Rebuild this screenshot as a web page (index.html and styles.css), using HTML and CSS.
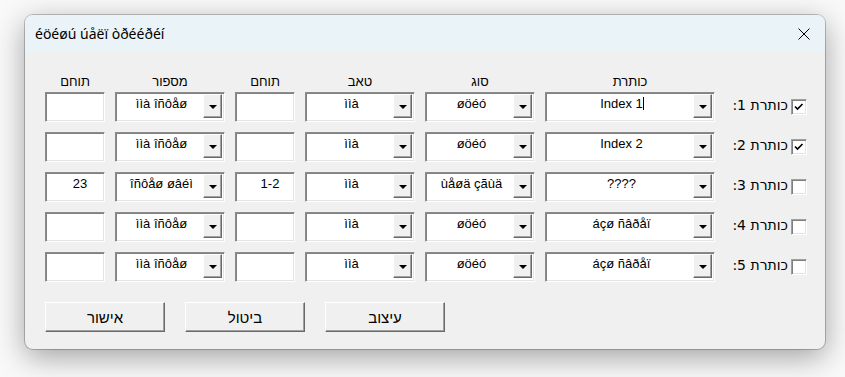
FILE: index.html
```html
<!DOCTYPE html>
<html lang="he">

<head>
    <meta charset="UTF-8">
    <meta name="viewport" content="width=device-width, initial-scale=1.0">
    <title>éöéøú úåëï òðééðéí</title>
    <link rel="stylesheet" href="styles.css">
</head>

<body>
    <div class="win">
        <div class="titlebar">
            <span class="title">éöéøú úåëï òðééðéí</span>
            <svg class="close" width="12" height="12" viewBox="0 0 12 12">
                <path d="M0.5 0.5L11.5 11.5M11.5 0.5L0.5 11.5" stroke="#000" stroke-width="1" fill="none" />
            </svg>
        </div>

        <div class="content">
            <div class="cols head">
                <div>תוחם</div>
                <div>מספור</div>
                <div>תוחם</div>
                <div>טאב</div>
                <div>סוג</div>
                <div>כותרת</div>
                <div></div>
            </div>

            <div class="rows">
                <!-- 1 -->
                <div class="cols row">
                    <div class="edit"></div>
                    <div class="combo"><span class="val">ììà îñôåø</span><span class="drop"></span></div>
                    <div class="edit"></div>
                    <div class="combo"><span class="val">ììà</span><span class="drop"></span></div>
                    <div class="combo"><span class="val">øöéó</span><span class="drop"></span></div>
                    <div class="combo"><span class="val">Index 1<i class="caret"></i></span><span class="drop"></span></div>
                    <div class="chk"><span class="txt" dir="rtl">כותרת 1:</span><span class="box"><svg width="14" height="14" viewBox="0 0 14 14"><path d="M3 6.5L5.5 9L10.5 4" stroke="#000" stroke-width="1.7" fill="none" /></svg></span></div>
                </div>
                <!-- 2 -->
                <div class="cols row">
                    <div class="edit"></div>
                    <div class="combo"><span class="val">ììà îñôåø</span><span class="drop"></span></div>
                    <div class="edit"></div>
                    <div class="combo"><span class="val">ììà</span><span class="drop"></span></div>
                    <div class="combo"><span class="val">øöéó</span><span class="drop"></span></div>
                    <div class="combo"><span class="val">Index 2</span><span class="drop"></span></div>
                    <div class="chk"><span class="txt" dir="rtl">כותרת 2:</span><span class="box"><svg width="14" height="14" viewBox="0 0 14 14"><path d="M3 6.5L5.5 9L10.5 4" stroke="#000" stroke-width="1.7" fill="none" /></svg></span></div>
                </div>
                <!-- 3 -->
                <div class="cols row">
                    <div class="edit">23</div>
                    <div class="combo"><span class="val">îñôåø øâéì</span><span class="drop"></span></div>
                    <div class="edit">1-2</div>
                    <div class="combo"><span class="val">ììà</span><span class="drop"></span></div>
                    <div class="combo"><span class="val">ùåøä çãùä</span><span class="drop"></span></div>
                    <div class="combo"><span class="val">????</span><span class="drop"></span></div>
                    <div class="chk"><span class="txt" dir="rtl">כותרת 3:</span><span class="box"></span></div>
                </div>
                <!-- 4 -->
                <div class="cols row">
                    <div class="edit"></div>
                    <div class="combo"><span class="val">ììà îñôåø</span><span class="drop"></span></div>
                    <div class="edit"></div>
                    <div class="combo"><span class="val">ììà</span><span class="drop"></span></div>
                    <div class="combo"><span class="val">øöéó</span><span class="drop"></span></div>
                    <div class="combo"><span class="val">áçø ñâðåï</span><span class="drop"></span></div>
                    <div class="chk"><span class="txt" dir="rtl">כותרת 4:</span><span class="box"></span></div>
                </div>
                <!-- 5 -->
                <div class="cols row">
                    <div class="edit"></div>
                    <div class="combo"><span class="val">ììà îñôåø</span><span class="drop"></span></div>
                    <div class="edit"></div>
                    <div class="combo"><span class="val">ììà</span><span class="drop"></span></div>
                    <div class="combo"><span class="val">øöéó</span><span class="drop"></span></div>
                    <div class="combo"><span class="val">áçø ñâðåï</span><span class="drop"></span></div>
                    <div class="chk"><span class="txt" dir="rtl">כותרת 5:</span><span class="box"></span></div>
                </div>
            </div>

            <div class="buttons">
                <div class="btn">אישור</div>
                <div class="btn">ביטול</div>
                <div class="btn">עיצוב</div>
            </div>
        </div>
    </div>
</body>

</html>
```

FILE: styles.css
```css
* {
    padding: 0;
    margin: 0;
}

html,
body {
    height: 100%;
}

body {
    box-sizing: border-box;
    background-color: #f9f9f9;
    padding: 15px 0 0 25px;
    font-family: "Liberation Sans", "DejaVu Sans", sans-serif;
    font-size: 13px;
    color: #000;
}

.win {
    width: 800px;
    height: 334px;
    background-color: #f0f0f0;
    border-radius: 8px;
    overflow: hidden;
    box-shadow: 0 0 0 1px rgba(0, 0, 0, .22), 0 8px 30px rgba(0, 0, 0, .36);
}

.titlebar {
    height: 37px;
    background-color: #eaf4f8;
    display: flex;
    align-items: center;
    justify-content: space-between;
    padding: 0 15px 0 10px;
}

.title {
    font-family: "Noto Sans", sans-serif;
    font-size: 14px;
}

.content {
    padding: 22px 18px 0 20px;
}

.cols {
    display: grid;
    grid-template-columns: 60px 110px 60px 110px 110px 170px 1fr;
    column-gap: 10px;
}

.head div {
    text-align: center;
    line-height: 16px;
}

.rows {
    display: flex;
    flex-direction: column;
    gap: 10px;
    margin-top: 2px;
}

.row {
    height: 30px;
}

/* sunken edit / combo frame */
.edit,
.combo {
    box-sizing: border-box;
    height: 30px;
    background-color: #fff;
    border: 1px solid;
    border-color: #8c8c8c #fff #fff #8c8c8c;
    box-shadow: inset 1px 1px #808080, inset -1px -1px #e3e3e3;
    line-height: 15px;
    white-space: nowrap;
}

.edit {
    text-align: center;
    padding: 3px 0 0 10px;
}

.combo {
    display: flex;
}

.combo .val {
    flex: 1;
    text-align: center;
    padding: 3px 0 0 4px;
}

.caret {
    display: inline-block;
    width: 0;
    height: 13px;
    border-left: 1px solid #000;
    margin-right: -1px;
    vertical-align: -2px;
}

.drop {
    box-sizing: border-box;
    width: 19px;
    height: 24px;
    margin: 1px 2px 1px 0;
    background-color: #f0f0f0;
    border: 1px solid;
    border-color: #fff #696969 #696969 #fff;
    box-shadow: inset -1px -1px #a0a0a0;
    display: flex;
    align-items: center;
    justify-content: center;
}

.drop::after {
    content: "";
    width: 0;
    height: 0;
    border-left: 4px solid transparent;
    border-right: 4px solid transparent;
    border-top: 4px solid #000;
    margin-top: 1px;
}

.chk {
    display: flex;
    justify-content: flex-end;
    align-items: center;
    gap: 3px;
}

.chk .txt {
    font-family: "DejaVu Sans", sans-serif;
    font-size: 14px;
    line-height: 15px;
    margin-bottom: 3px;
}

.box {
    box-sizing: border-box;
    width: 16px;
    height: 16px;
    background-color: #fff;
    border: 1px solid;
    border-color: #a0a0a0 #fff #fff #a0a0a0;
    box-shadow: inset 1px 1px #808080, inset -1px -1px #e3e3e3;
}

.box svg {
    display: block;
}

.buttons {
    display: flex;
    gap: 20px;
    margin-top: 20px;
}

.btn {
    box-sizing: border-box;
    width: 120px;
    height: 30px;
    background-color: #f0f0f0;
    border: 1px solid;
    border-color: #fff #696969 #696969 #fff;
    box-shadow: inset -1px -1px #a0a0a0;
    display: flex;
    align-items: center;
    justify-content: center;
    font-size: 15px;
    line-height: 15px;
}
```
